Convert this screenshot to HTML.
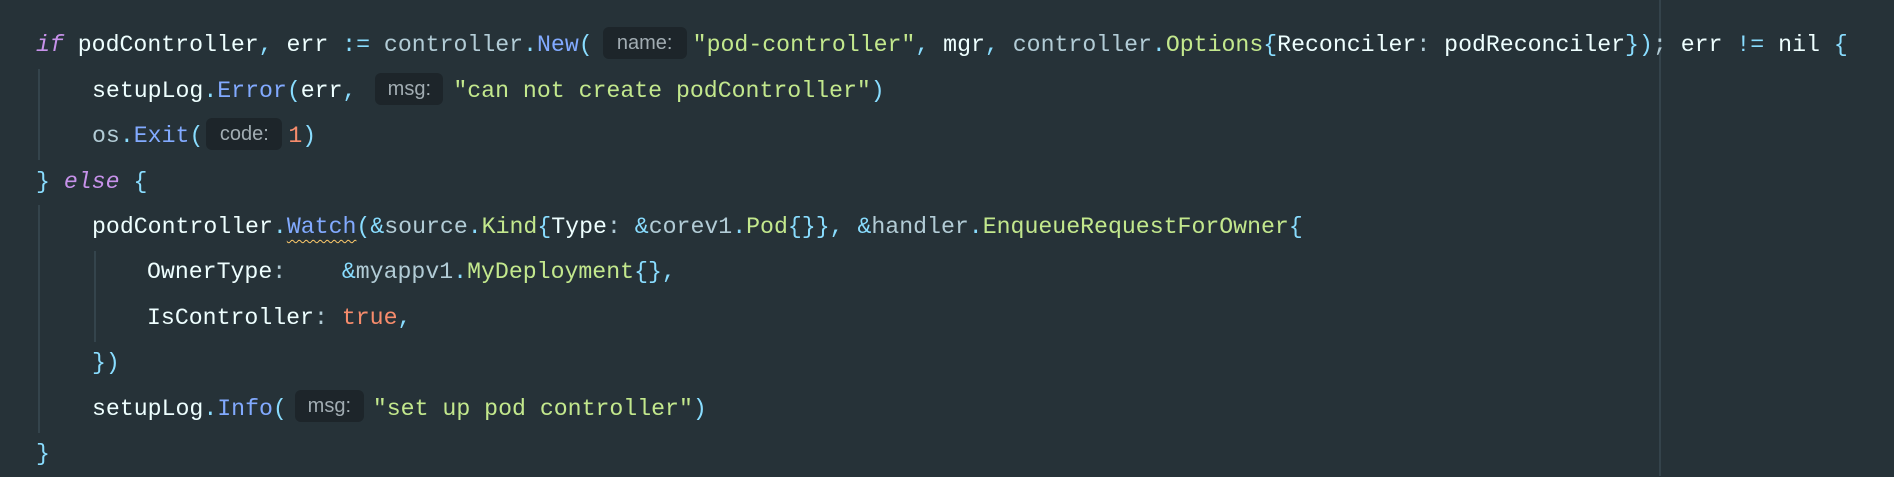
<!DOCTYPE html>
<html><head><meta charset="utf-8"><style>
html,body{margin:0;padding:0;}
body{width:1894px;height:476px;background:#263238;position:relative;overflow:hidden;
font-family:"Liberation Mono",monospace;font-size:23.2px;color:#eeffff;}
.l{position:absolute;left:36px;height:45.4px;line-height:45.4px;white-space:pre;}
.kw{color:#c792ea;font-style:italic}
.fn{color:#82aaff}
.ty{color:#c3e88d}
.st{color:#c3e88d}
.p{color:#89ddff}
.n{color:#f78c6c}
.g{color:#b2ccd6}
.h{display:inline-block;height:32px;line-height:32px;vertical-align:middle;position:relative;top:-2px;background:#1d252a;color:#a1acb2;
font-family:"Liberation Sans",sans-serif;font-size:20px;border-radius:6px;text-align:center;}
.w{text-decoration:underline wavy #ffcb6b;text-decoration-thickness:1px;text-underline-offset:6px}
.guide{position:absolute;width:2px;background:#34444c}
</style></head><body>
<div class="guide" style="left:38px;top:69px;height:91px"></div>
<div class="guide" style="left:38px;top:205px;height:228px"></div>
<div class="guide" style="left:94px;top:251px;height:91px"></div>
<div style="position:absolute;left:1659px;top:0;width:2px;height:476px;background:#34434b"></div>

<div class="l" style="top:23.3px"><span class="kw">if</span> podController<span class="p">,</span> err <span class="p">:=</span> <span class="g">controller</span><span class="p">.</span><span class="fn">New</span><span class="p">(</span><span class="h" style="margin-left:10px;width:84px;margin-right:6px">name:</span><span class="st">"pod-controller"</span><span class="p">,</span> mgr<span class="p">,</span> <span class="g">controller</span><span class="p">.</span><span class="ty">Options</span><span class="p">{</span>Reconciler<span class="g">:</span> podReconciler<span class="p">})</span><span class="g">;</span> err <span class="p">!=</span> nil <span class="p">{</span></div>

<div class="l" style="top:68.7px;left:92px">setupLog<span class="p">.</span><span class="fn">Error</span><span class="p">(</span>err<span class="p">,</span> <span class="h" style="margin-left:5px;width:68px;margin-right:10px">msg:</span><span class="st">"can not create podController"</span><span class="p">)</span></div>

<div class="l" style="top:114.1px;left:92px"><span class="g">os</span><span class="p">.</span><span class="fn">Exit</span><span class="p">(</span><span class="h" style="margin-left:3px;width:76px;margin-right:6px">code:</span><span class="n">1</span><span class="p">)</span></div>

<div class="l" style="top:159.5px"><span class="p">}</span> <span class="kw">else</span> <span class="p">{</span></div>

<div class="l" style="top:204.9px;left:92px">podController<span class="p">.</span><span class="fn w">Watch</span><span class="p">(&amp;</span><span class="g">source</span><span class="p">.</span><span class="ty">Kind</span><span class="p">{</span>Type<span class="g">:</span> <span class="p">&amp;</span><span class="g">corev1</span><span class="p">.</span><span class="ty">Pod</span><span class="p">{}},</span> <span class="p">&amp;</span><span class="g">handler</span><span class="p">.</span><span class="ty">EnqueueRequestForOwner</span><span class="p">{</span></div>

<div class="l" style="top:250.3px;left:147px">OwnerType<span class="g">:</span>    <span class="p">&amp;</span><span class="g">myappv1</span><span class="p">.</span><span class="ty">MyDeployment</span><span class="p">{}</span><span class="p">,</span></div>

<div class="l" style="top:295.7px;left:147px">IsController<span class="g">:</span> <span class="n">true</span><span class="p">,</span></div>

<div class="l" style="top:341.1px;left:92px"><span class="p">})</span></div>

<div class="l" style="top:386.5px;left:92px">setupLog<span class="p">.</span><span class="fn">Info</span><span class="p">(</span><span class="h" style="margin-left:8px;width:69px;margin-right:9px">msg:</span><span class="st">"set up pod controller"</span><span class="p">)</span></div>

<div class="l" style="top:431.9px"><span class="p">}</span></div>
</body></html>
